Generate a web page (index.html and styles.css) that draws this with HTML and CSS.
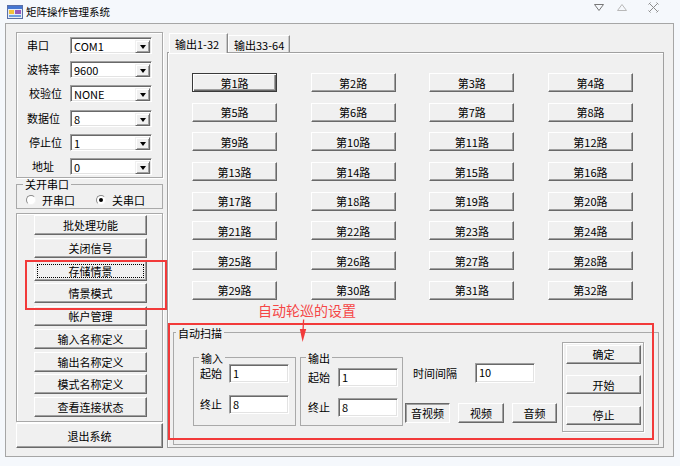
FILE: index.html
```html
<!DOCTYPE html>
<html lang="zh-CN">
<head>
<meta charset="utf-8">
<title>矩阵操作管理系统</title>
<link rel="stylesheet" href="styles.css">
</head>
<body>
<div class="window">
  <div class="titlebar">
    <svg class="app-icon" viewBox="0 0 16 16" width="16" height="16">
      <rect x="0.5" y="1.5" width="15" height="13" fill="#e6ecf6" stroke="#5a6fa6"/>
      <rect x="1" y="2" width="14" height="3" fill="#4677d2"/>
      <rect x="2" y="6" width="5" height="4" fill="#f2c23a"/>
      <rect x="8" y="6" width="6" height="4" fill="#9459bd"/>
      <rect x="2" y="11" width="12" height="2" fill="#6e9fe0"/>
    </svg>
    <span class="title">矩阵操作管理系统</span>
    <div class="winctl">
      <svg class="ctl-min" width="10" height="7" viewBox="0 0 10 7"><path d="M0.5 0.5 H9.5 L5 6.5 Z" fill="none" stroke="#777"/></svg>
      <svg class="ctl-max" width="10" height="7" viewBox="0 0 10 7"><path d="M0.5 6.5 H9.5 L5 0.5 Z" fill="none" stroke="#b8b8b8"/></svg>
      <svg class="ctl-close" width="11" height="11" viewBox="0 0 11 11"><path d="M1.5 1.5 L9.5 9.5 M9.5 1.5 L1.5 9.5 M0.5 2.5 L2.5 0.5 M8.5 0.5 L10.5 2.5 M0.5 8.5 L2.5 10.5 M8.5 10.5 L10.5 8.5" fill="none" stroke="#8c8c8c" stroke-width="1"/></svg>
    </div>
  </div>

  <div class="client">
    <div class="leftcol">
      <div class="group fields">
        <div class="frow"><span class="flabel">串口</span><div class="sunken combo"><span class="cval">COM1</span><span class="cbtn"><i class="tri"></i></span></div></div>
        <div class="frow"><span class="flabel">波特率</span><div class="sunken combo"><span class="cval">9600</span><span class="cbtn"><i class="tri"></i></span></div></div>
        <div class="frow"><span class="flabel ind2">校验位</span><div class="sunken combo"><span class="cval">NONE</span><span class="cbtn"><i class="tri"></i></span></div></div>
        <div class="frow"><span class="flabel">数据位</span><div class="sunken combo"><span class="cval">8</span><span class="cbtn"><i class="tri"></i></span></div></div>
        <div class="frow"><span class="flabel ind2">停止位</span><div class="sunken combo"><span class="cval">1</span><span class="cbtn"><i class="tri"></i></span></div></div>
        <div class="frow"><span class="flabel ind5">地址</span><div class="sunken combo"><span class="cval">0</span><span class="cbtn"><i class="tri"></i></span></div></div>
      </div>

      <fieldset class="fs radios">
        <legend>关开串口</legend>
        <div class="rrow">
          <span class="radio first"><span class="rdot"></span>开串口</span>
          <span class="radio"><span class="rdot on"></span>关串口</span>
        </div>
      </fieldset>

      <div class="group btngroup">
        <button class="btn lbtn">批处理功能</button>
        <button class="btn lbtn">关闭信号</button>
        <div class="mark">
          <button class="btn lbtn focus">存储情景</button>
          <button class="btn lbtn">情景模式</button>
        </div>
        <button class="btn lbtn">帐户管理</button>
        <button class="btn lbtn">输入名称定义</button>
        <button class="btn lbtn">输出名称定义</button>
        <button class="btn lbtn">模式名称定义</button>
        <button class="btn lbtn">查看连接状态</button>
      </div>
      <button class="btn exit">退出系统</button>
    </div>

    <div class="tabctl">
      <div class="tabs">
        <div class="tab active">输出1-32</div>
        <div class="tab">输出33-64</div>
      </div>
      <div class="tabpage">
        <div class="grid">
          <button class="btn default">第1路</button>
          <button class="btn">第2路</button>
          <button class="btn">第3路</button>
          <button class="btn">第4路</button>
          <button class="btn">第5路</button>
          <button class="btn">第6路</button>
          <button class="btn">第7路</button>
          <button class="btn">第8路</button>
          <button class="btn">第9路</button>
          <button class="btn">第10路</button>
          <button class="btn">第11路</button>
          <button class="btn">第12路</button>
          <button class="btn">第13路</button>
          <button class="btn">第14路</button>
          <button class="btn">第15路</button>
          <button class="btn">第16路</button>
          <button class="btn">第17路</button>
          <button class="btn">第18路</button>
          <button class="btn">第19路</button>
          <button class="btn">第20路</button>
          <button class="btn">第21路</button>
          <button class="btn">第22路</button>
          <button class="btn">第23路</button>
          <button class="btn">第24路</button>
          <button class="btn">第25路</button>
          <button class="btn">第26路</button>
          <button class="btn">第27路</button>
          <button class="btn">第28路</button>
          <button class="btn">第29路</button>
          <button class="btn">第30路</button>
          <button class="btn">第31路</button>
          <button class="btn">第32路</button>
        </div>
        <div class="note">自动轮巡的设置</div>

        <fieldset class="fs auto">
          <legend>自动扫描</legend>
          <div class="autobody">
            <fieldset class="fs sub">
              <legend>输入</legend>
              <div class="subbody">
                <div class="erow"><span class="elabel">起始</span><div class="sunken edit">1</div></div>
                <div class="erow"><span class="elabel">终止</span><div class="sunken edit">8</div></div>
              </div>
            </fieldset>
            <fieldset class="fs sub out">
              <legend>输出</legend>
              <div class="subbody">
                <div class="erow"><span class="elabel">起始</span><div class="sunken edit">1</div></div>
                <div class="erow"><span class="elabel">终止</span><div class="sunken edit">8</div></div>
              </div>
            </fieldset>
            <div class="mid">
              <div class="irow"><span class="ilabel">时间间隔</span><div class="sunken edit tall">10</div></div>
              <div class="brow">
                <button class="btn pressed mbtn">音视频</button>
                <button class="btn mbtn">视频</button>
                <button class="btn mbtn">音频</button>
              </div>
            </div>
            <div class="group side">
              <button class="btn sbtn">确定</button>
              <button class="btn sbtn">开始</button>
              <button class="btn sbtn">停止</button>
            </div>
          </div>
        </fieldset>

        <div class="redbox"></div>
        <svg class="arrow" width="10" height="24" viewBox="0 0 10 24">
          <path d="M5.6 0.5 L5 12" stroke="#f23a3a" stroke-width="1.3" fill="none"/>
          <path d="M1.8 10 L8.2 10 L4.6 23 Z" fill="#f23a3a"/>
        </svg>
      </div>
    </div>
  </div>
</div>
</body>
</html>
```

FILE: styles.css
```css
* { box-sizing: border-box; }
html, body { margin: 0; padding: 0; }
body {
  width: 680px;
  height: 466px;
  overflow: hidden;
  background: #f5f8fc;
  font-family: "Noto Sans CJK SC", "Noto Sans", sans-serif;
  font-size: 11px;
  color: #000;
}

/* ---------- title bar ---------- */
.titlebar {
  height: 23px;
  display: flex;
  align-items: center;
  padding-left: 7px;
}
.app-icon { display: block; width: 16px; height: 16px; }
.title { margin-left: 3px; font-size: 10.5px; line-height: 14px; }
.winctl {
  margin-left: auto;
  margin-right: 21px;
  height: 23px;
  display: flex;
  align-items: flex-start;
}
.winctl svg { display: block; }
.ctl-min { margin-top: 4px; }
.ctl-max { margin-top: 4px; margin-left: 13px; }
.ctl-close { margin-top: 2px; margin-left: 21px; }

/* ---------- client ---------- */
.client {
  margin-left: 5px;
  width: 669px;
  height: 434px;
  border: 1px solid #a6a6a6;
  background: #f0f0f0;
  display: flex;
  gap: 4px;
  padding: 8px 9px 8px 10px;
}

/* etched group */
.group {
  border: 1px solid #a9a9a9;
  box-shadow: 1px 1px 0 #fff, inset 1px 1px 0 #fff;
}
.fs {
  margin: 0;
  padding: 0;
  min-width: 0;
  border: 1px solid #a9a9a9;
}
.fs > legend {
  padding: 0 2px;
  font-size: 11px;
  line-height: 12px;
}

/* ---------- left column ---------- */
.leftcol {
  width: 147px;
  display: flex;
  flex-direction: column;
}
.fields {
  height: 146px;
  padding: 4px 0 0 10px;
  display: flex;
  flex-direction: column;
  gap: 7.2px;
}
.frow { display: flex; align-items: center; height: 17px; }
.flabel { width: 43px; line-height: 17px; }
.flabel.ind2 { padding-left: 2px; }
.flabel.ind5 { padding-left: 5px; }

.sunken {
  background: #fff;
  border: 1px solid;
  border-color: #a0a0a0 #fff #fff #a0a0a0;
  box-shadow: inset 1px 1px 0 #696969, inset -1px -1px 0 #e3e3e3;
}
.combo {
  width: 82px;
  height: 17px;
  display: flex;
  padding: 1px 1px 1px 1px;
}
.cval { flex: 1; padding-left: 2px; line-height: 14px; font-size: 11px; }
.cbtn {
  width: 15px;
  height: 13px;
  margin-top: 1px;
  background: #f0f0f0;
  border: 1px solid;
  border-color: #f0f0f0 #696969 #696969 #f0f0f0;
  box-shadow: inset 1px 1px 0 #fff, inset -1px -1px 0 #a0a0a0;
  display: flex;
  align-items: center;
  justify-content: center;
}
.tri {
  display: block;
  width: 0;
  height: 0;
  margin-top: 1px;
  border-left: 3.5px solid transparent;
  border-right: 3.5px solid transparent;
  border-top: 4px solid #000;
}

.radios { height: 31px; }
.radios > legend { margin-left: 6px; }
.rrow {
  display: flex;
  align-items: center;
  height: 18px;
  padding: 3px 0 1px 9px;
}
.radio { display: flex; align-items: center; gap: 6px; line-height: 13px; }
.radio.first { margin-right: 21px; }
.rdot {
  width: 10px;
  height: 10px;
  border-radius: 50%;
  background: #fff;
  border: 1px solid;
  border-color: #8a8a8a #f4f4f4 #f4f4f4 #8a8a8a;
  display: flex;
  align-items: center;
  justify-content: center;
}
.rdot.on::after {
  content: "";
  width: 4px;
  height: 4px;
  border-radius: 50%;
  background: #000;
}

.btngroup {
  margin-top: 4px;
  height: 209px;
  padding: 1px 0 0 17px;
  display: flex;
  flex-direction: column;
  gap: 2.75px;
}
.mark {
  position: relative;
  display: flex;
  flex-direction: column;
  gap: 2.75px;
}
.mark::after {
  content: "";
  position: absolute;
  left: -9px;
  top: -1px;
  width: 138px;
  height: 46px;
  border: 2px solid #f23a3a;
}

/* buttons */
.btn {
  font-family: inherit;
  font-size: 11px;
  line-height: 14px;
  color: #000;
  margin: 0;
  padding: 0;
  background: #f0f0f0;
  border: 1px solid;
  border-color: #fff #696969 #696969 #fff;
  box-shadow: inset -1px -1px 0 #a0a0a0;
  display: flex;
  align-items: center;
  justify-content: center;
}
.btn.default {
  border-color: #3a3a3a;
  box-shadow: inset 1px 1px 0 #fff, inset -1px -1px 0 #696969, inset -2px -2px 0 #a0a0a0;
}
.btn.focus {
  outline: 1px dotted #000;
  outline-offset: -4px;
}
.btn.pressed {
  border-color: #696969 #fff #fff #696969;
  box-shadow: inset 1px 1px 0 #a0a0a0;
}
.lbtn { width: 113px; height: 20px; }
.exit { margin-top: 1px; width: 147px; height: 25px; }

/* ---------- tab control ---------- */
.tabctl {
  width: 497px;
  display: flex;
  flex-direction: column;
}
.tabs {
  height: 21px;
  margin-bottom: -1px;
  padding-left: 2px;
  display: flex;
  align-items: flex-end;
  position: relative;
  z-index: 1;
}
.tab {
  width: 62px;
  height: 17px;
  margin-bottom: 1px;
  padding: 2px 0 0 5px;
  line-height: 14px;
  border: 1px solid;
  border-bottom: none;
  border-color: #fff #8a8a8a transparent #fff;
  box-shadow: inset -1px 0 0 #c8c8c8;
  background: #f0f0f0;
}
.tab.active {
  width: 59px;
  height: 20px;
  margin-bottom: 0;
  padding-top: 3px;
  padding-left: 5px;
}
.tabpage {
  flex: 1;
  position: relative;
  border: 1px solid #a0a0a0;
  box-shadow: inset 1px 1px 0 #fff;
  padding: 20px 0 0 24px;
}
.grid {
  display: grid;
  grid-template-columns: repeat(4, 85px);
  grid-auto-rows: 19px;
  column-gap: 33.67px;
  row-gap: 10.7px;
}
.note {
  margin: 2px 0 0 66px;
  height: 16px;
  font-size: 14px;
  line-height: 16px;
  color: #f54646;
}

.auto {
  margin: 9px 0 0 -19px;
  width: 486px;
  height: 118px;
}
.auto > legend { margin-left: 2px; }
.autobody {
  display: flex;
  align-items: flex-start;
  padding-left: 19px;
}
.sub {
  width: 103px;
  height: 74px;
  margin-top: 13px;
}
.sub > legend { margin-left: 5px; }
.sub.out { margin-left: 4px; }
.subbody {
  display: flex;
  flex-direction: column;
  gap: 12px;
  padding-left: 6px;
}
.out .subbody { padding-left: 7px; padding-top: 4px; gap: 11px; }
.erow { display: flex; align-items: center; gap: 7px; }
.out .erow { gap: 8px; }
.elabel { width: 22px; line-height: 14px; }
.edit {
  width: 60px;
  height: 19px;
  padding-left: 3px;
  line-height: 16px;
  font-size: 11px;
}
.edit.tall { height: 20px; }

.mid {
  margin: 24px 0 0 2px;
  display: flex;
  flex-direction: column;
}
.irow { display: flex; align-items: center; }
.ilabel { width: 70px; padding-left: 8px; line-height: 14px; }
.brow { margin-top: 20px; display: flex; gap: 8px; }
.mbtn { width: 45px; height: 20px; }
.mbtn:nth-child(2) { width: 46px; }

.side {
  margin: 3px 0 0 5px;
  width: 82px;
  height: 90px;
  padding: 2px 0 0 3px;
  display: flex;
  flex-direction: column;
  gap: 11.5px;
}
.sbtn { width: 75px; height: 19px; }

/* annotation overlays */
.redbox {
  position: absolute;
  left: 0;
  top: 270px;
  width: 486px;
  height: 117px;
  border: 2px solid #f23a3a;
  pointer-events: none;
}
.arrow {
  position: absolute;
  left: 130px;
  top: 266px;
  display: block;
}
```
